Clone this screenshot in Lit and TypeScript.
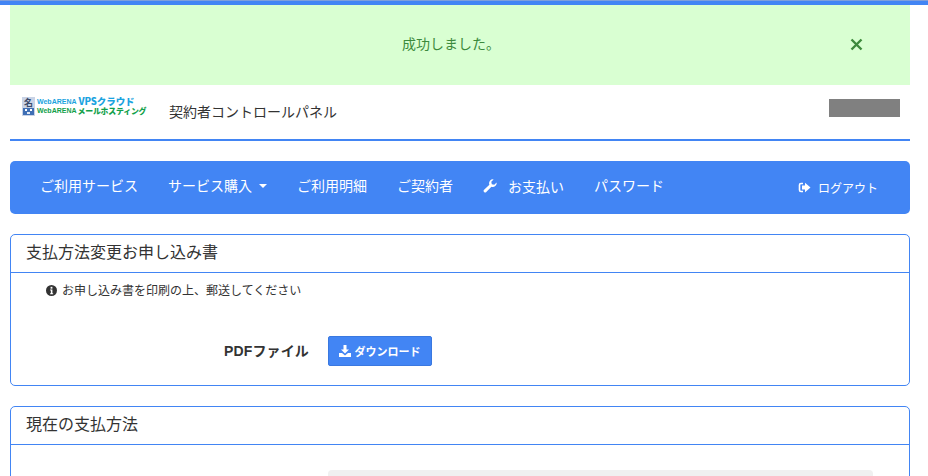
import { LitElement, html, css } from "lit";
import { customElement } from "lit/decorators.js";

@customElement("app-root")
export class AppRoot extends LitElement {
  static styles = css`
    :host { display: block; height: 476px; overflow: hidden; background: #fff; color: #333;
      font-family: "Noto Sans CJK JP", "Noto Sans", sans-serif; }
    * { box-sizing: border-box; }
    .topline { height: 5px; background: #4285f4; border-top: 1px solid #7f9fdc; }
    .wrap { width: 900px; margin-left: 10px; }
    .alert { height: 80px; background: #d9ffd2; color: #3c8a3c; display: flex; align-items: center; justify-content: center; font-size: 14px; position: relative; padding: 0 18px 5px 0; }
    .close { position: absolute; left: 839.500px; top: 33px; width: 13px; height: 13px; display: block; }
    .head { height: 56px; border-bottom: 2px solid #4285f4; display: flex; position: relative; }
    .logo { margin: 12px 0 0 12px; display: flex; gap: 2px; width: 124px; height: 20px; }
    .mark { width: 13px; height: 19px; flex: none; }
    .marktext { font-size: 9px; font-weight: 700; fill: #3a4a6a; }
    .logotext { font-weight: 900; font-size: 7.900px; line-height: 9px; white-space: nowrap; letter-spacing: -0.2px; }
    .l1 { color: #1aa3e0; display: flex; align-items: center; gap: 2px; height: 9px; }
    .l2 { color: #12a04a; display: flex; align-items: center; gap: 1px; height: 9px; }
    .big { font-size: 9.500px; letter-spacing: -0.1px; line-height: 9px; }
    .small { line-height: 9px; }
    .tiny { font-size: 7px; letter-spacing: 0; font-family: "Liberation Sans", sans-serif; font-weight: 700; line-height: 9px; }
    .title { margin: 15px 0 0 23px; font-size: 14px; line-height: 22px; color: #333; }
    .redact { position: absolute; left: 819px; top: 14px; width: 71px; height: 18px; background: #808080; }
    .nav { margin-top: 20px; height: 53px; background: #4285f4; border-radius: 5px; display: flex; align-items: center; color: #fff; font-size: 14px; padding: 0 32px 5px 30px; }
    .nav a { display: flex; align-items: center; white-space: nowrap; margin-right: 30px; line-height: 20px; }
    .caret { width: 0; height: 0; border: 4px solid transparent; border-top-color: #fff; border-bottom: 0; margin-left: 7px; margin-top: 2px; }
    .wrench { width: 14px; height: 14px; margin-right: 11px; }
    .pay { margin-top: 2px; }
    .logout { margin-left: auto; margin-top: 4px; font-size: 12px; display: flex; align-items: center; gap: 7px; }
    .logout svg { width: 13px; height: 13px; }
    .panel { margin-top: 20px; border: 1px solid #4285f4; border-radius: 5px; }
    .panel-h { height: 38px; border-bottom: 1px solid #4285f4; padding-left: 15px; font-size: 16px; line-height: 33px; color: #333; }
    .p1 { height: 152px; }
    .note { margin: 7px 0 0 35px; font-size: 12px; line-height: 20px; display: flex; align-items: center; gap: 5px; height: 20px; }
    .note svg { width: 11px; height: 11px; }
    .row { display: flex; align-items: center; margin-top: 36px; height: 30px; }
    .lbl { width: 298px; text-align: right; font-weight: 700; font-size: 14px; letter-spacing: 0.15px; line-height: 18px; font-family: "Liberation Sans", "Noto Sans CJK JP", sans-serif; }
    .btn { margin-left: 19px; width: 104px; height: 30px; background: #4285f4; border: 1px solid #3a78e0; border-radius: 2px; color: #fff; display: flex; align-items: center; justify-content: center; gap: 4px; font-size: 11px; font-weight: 700; padding-right: 1px; }
    .btn svg { width: 12px; height: 12px; }
    .p2 { height: 100px; }
    .field { margin: 25px 0 0 317px; width: 545px; height: 34px; background: #f0f0f0; border-radius: 4px; }
  `;

  render() {
    return html`
      <div class="topline"></div>
      <div class="wrap">
        <div class="alert">成功しました。
          <svg class="close" viewBox="0 0 13 13"><path d="M1.500 1.500 11.500 11.500M11.500 1.500 1.500 11.500" stroke="#3c8a3c" stroke-width="2.400" fill="none"/></svg>
        </div>
        <div class="head">
          <div class="logo">
            <svg class="mark" viewBox="0 0 13 19">
              <rect width="13" height="19" fill="#c9d3e6"/>
              <text class="marktext" x="2" y="9">名</text>
              <rect x="1" y="11" width="11" height="7" fill="#3f6fb5"/>
              <rect x="3" y="12" width="2" height="2" fill="#fff"/><rect x="8" y="12" width="2" height="2" fill="#fff"/><rect x="5" y="15" width="3" height="2" fill="#dfe8f5"/>
            </svg>
            <div class="logotext">
              <div class="l1"><span class="tiny">WebARENA</span><span class="big">VPSクラウド</span></div>
              <div class="l2"><span class="tiny">WebARENA</span><span class="small">メールホスティング</span></div>
            </div>
          </div>
          <div class="title">契約者コントロールパネル</div>
          <div class="redact"></div>
        </div>
        <nav class="nav">
          <a>ご利用サービス</a>
          <a>サービス購入<span class="caret"></span></a>
          <a>ご利用明細</a>
          <a>ご契約者</a>
          <a class="pay">
            <svg class="wrench" viewBox="0 0 14 14"><path d="M13.6 3.4a3.9 3.9 0 0 1-5.2 4.3L3.3 13a1.5 1.5 0 0 1-2.2-2.2l5.3-5.1A3.9 3.9 0 0 1 10.6.4L8.3 2.700l.5 2.500 2.500.5z" fill="#fff"/></svg>お支払い</a>
          <a>パスワード</a>
          <div class="logout">
            <svg viewBox="0 0 13 13"><path d="M5 2.500H3a1.500 1.500 0 0 0-1.500 1.500v5A1.500 1.500 0 0 0 3 10.500h2" stroke="#fff" stroke-width="1.600" fill="none"/><path d="M7 1.800 12.500 6.500 7 11.200V8.500H4v-4h3z" fill="#fff"/></svg>
            ログアウト
          </div>
        </nav>
        <section class="panel p1">
          <div class="panel-h">支払方法変更お申し込み書</div>
          <div class="note">
            <svg viewBox="0 0 12 12"><circle cx="6" cy="6" r="6" fill="#333"/><rect x="5" y="2" width="2" height="2" fill="#fff"/><path d="M4.500 5H7v4h.8v1H4.500V9h.8V6h-.8z" fill="#fff"/></svg>
            お申し込み書を印刷の上、郵送してください
          </div>
          <div class="row">
            <div class="lbl">PDFファイル</div>
            <div class="btn">
              <svg viewBox="0 0 12 12"><path d="M4.500 0h3v4.500H10L6 8.500 2 4.500h2.500z" fill="#fff"/><path d="M0 8h3l3 2.500L9 8h3v4H0z" fill="#fff"/></svg>
              ダウンロード
            </div>
          </div>
        </section>
        <section class="panel p2">
          <div class="panel-h">現在の支払方法</div>
          <div class="field"></div>
        </section>
      </div>
    `;
  }
}
